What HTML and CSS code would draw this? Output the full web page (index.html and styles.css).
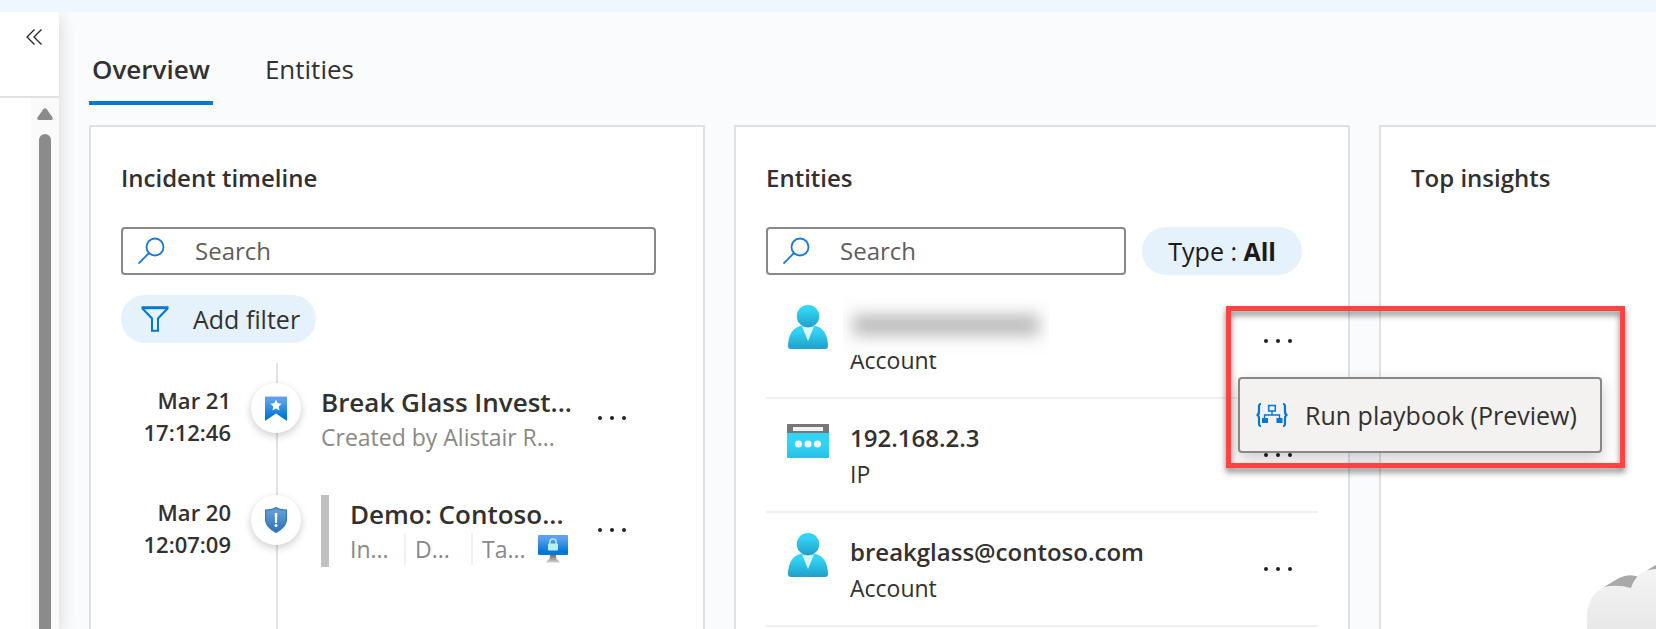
FILE: index.html
```
<!DOCTYPE html>
<html lang="en">
<head>
<meta charset="utf-8">
<title>Incident overview</title>
<link rel="stylesheet" href="styles.css">
</head>
<body>
<svg class="defs" width="0" height="0" aria-hidden="true">
  <defs>
    <linearGradient id="g-head" x1="0" y1="0" x2="0" y2="1"><stop offset=".2" stop-color="#32d4f5"/><stop offset="1" stop-color="#1f9fc8"/></linearGradient>
    <linearGradient id="g-window" x1="0" y1="0" x2="0" y2="1"><stop offset=".6" stop-color="#32d4f5"/><stop offset="1" stop-color="#2bbfe3"/></linearGradient>
    <linearGradient id="g-blue" x1="0" y1="0" x2="0" y2="1"><stop offset=".15" stop-color="#5ea0ef"/><stop offset=".85" stop-color="#0078d4"/></linearGradient>
    <linearGradient id="g-shield" x1="0" y1="0" x2="0" y2="1"><stop offset="0" stop-color="#6ba2dc"/><stop offset="1" stop-color="#2a72b8"/></linearGradient>
    <linearGradient id="g-cloud" x1="0" y1="0" x2="0" y2="1"><stop offset="0" stop-color="#f5f5f5"/><stop offset="1" stop-color="#dedede"/></linearGradient>
    <linearGradient id="g-stand" x1="0" y1="0" x2="0" y2="1"><stop offset="0" stop-color="#707070"/><stop offset="1" stop-color="#cfcfcf"/></linearGradient>
    <symbol id="i-search" viewBox="0 0 28 28"><circle cx="17" cy="10" r="8.5" fill="none" stroke="#1a78d8" stroke-width="1.8"/><path d="M11 16 .5 26.500" fill="none" stroke="#1a78d8" stroke-width="1.8"/></symbol>
    <symbol id="i-more" viewBox="0 0 30 6"><g fill="#1f1f1f"><circle cx="3" cy="3" r="2"/><circle cx="15" cy="3" r="2"/><circle cx="27" cy="3" r="2"/></g></symbol>
    <symbol id="i-user" viewBox="0 0 40 44"><path d="M3 44Q0 44 0 41C0 29 6 21 14 21H26C34 21 40 29 40 41Q40 44 37 44Z" fill="url(#g-head)"/><path d="M14 21.500H26L20 36Z" fill="#dcf6fd"/><circle cx="20" cy="11.200" r="11.200" fill="url(#g-head)"/></symbol>
  </defs>
</svg>
<div class="page">
  <header class="topbar"></header>
  <div class="body">
    <aside class="side">
      <div class="side-head">
        <button class="plain" aria-label="Collapse panel"><svg width="16" height="16" viewBox="0 0 16 16" fill="none" stroke="#252423" stroke-width="1.3"><path d="M8.500.5 1 8l7.500 7.500M15.500.5 8 8l7.500 7.500"/></svg></button>
      </div>
      <div class="scroll">
        <svg width="16" height="12" viewBox="0 0 16 12"><path d="M6 1.500Q8-1 10 1.500L15.500 9.500Q16.500 12 14 12H2Q-.5 12 .5 9.500Z" fill="#8b8b8b"/></svg>
        <div class="thumb"></div>
      </div>
    </aside>
    <main class="main">
      <nav class="tabs">
        <a class="tab active" href="#overview">Overview</a>
        <a class="tab" href="#entities">Entities</a>
      </nav>
      <div class="cards">
        <section class="card timeline-card">
          <h2>Incident timeline</h2>
          <div class="tools">
            <label class="search"><svg width="28" height="28"><use href="#i-search"/></svg><input type="text" placeholder="Search" aria-label="Search timeline"></label>
          </div>
          <button class="pill filter"><svg width="28" height="26" viewBox="0 0 28 26" fill="none" stroke="#0078d4" stroke-width="2"><path d="M1.500 1.200H26.500V2.500L17 12.500V24.800H11V12.500L1.500 2.500Z"/><path d="M1 2.200H27"/></svg>Add filter</button>
          <ol class="timeline">
            <li class="event">
              <time>Mar 21<br>17:12:46</time>
              <span class="dot"><svg width="22" height="25" viewBox="0 0 22 25"><path d="M0 0H22V25L11 17.500 0 25Z" fill="url(#g-blue)"/><path d="M0 0H22V1H0Z" fill="#b8d8fa"/><path d="m11 3.500 1.700 3.700 4 .5-3 2.800.8 4L11 12.500l-3.500 2 .8-4-3-2.800 4-.5Z" fill="#fff"/></svg></span>
              <div class="info">
                <h3>Break Glass Invest...</h3>
                <p>Created by Alistair R...</p>
              </div>
              <button class="more plain" aria-label="More actions"><svg width="30" height="6"><use href="#i-more"/></svg></button>
            </li>
            <li class="event">
              <time>Mar 20<br>12:07:09</time>
              <span class="dot"><svg width="22" height="26" viewBox="0 0 22 26"><path d="M11 .5C14 3 18 3 21.500 3V12C21.500 19 15.500 23 11 25.500 6.500 23 .5 19 .5 12V3C4 3 8 3 11 .5Z" fill="url(#g-shield)" stroke="#2f78bd" stroke-width="1.200"/><path d="M9.700 6H12.300L12 16H10Z" fill="#fff"/><circle cx="11" cy="18.500" r="1.500" fill="#fff"/></svg></span>
              <div class="info alert">
                <h3>Demo: Contoso...</h3>
                <p class="tags"><span>In...</span><span>D...</span><span>Ta...</span>
                  <svg width="30" height="28" viewBox="0 0 30 28"><path d="M12 20H18L18.500 24Q21 25.500 22 27.500H8Q9 25.500 11.500 24Z" fill="url(#g-stand)"/><rect width="30" height="20" rx="1" fill="url(#g-blue)"/><path d="M11.800 9V7.200a3.200 3.200 0 0 1 6.400 0V9" fill="none" stroke="#a9e9fb" stroke-width="1.600"/><rect x="10" y="8.500" width="10" height="7" rx="1" fill="#b5f0fc"/></svg></p>
              </div>
              <button class="more plain" aria-label="More actions"><svg width="30" height="6"><use href="#i-more"/></svg></button>
            </li>
          </ol>
        </section>
        <section class="card entities-card">
          <h2>Entities</h2>
          <div class="tools">
            <label class="search"><svg width="28" height="28"><use href="#i-search"/></svg><input type="text" placeholder="Search" aria-label="Search entities"></label>
            <button class="pill type">Type : <b>All</b></button>
          </div>
          <ul class="entities">
            <li class="entity">
              <svg class="kind" width="42" height="44"><use href="#i-user"/></svg>
              <div class="who"><span class="mask"><span class="smudge"></span></span><strong></strong><span>Account</span></div>
              <div class="actions">
                <button class="more plain" aria-label="More actions"><svg width="30" height="6"><use href="#i-more"/></svg></button>
                <div class="callout"></div>
                <button class="menu"><svg width="32" height="24" viewBox="0 0 32 24" fill="none" stroke="#0078d4"><path d="M5 1C3 1 3 2 3 4V8.500Q3 12 .5 12 3 12 3 15.500V20C3 22 3 23 5 23M27 1C29 1 29 2 29 4V8.500Q29 12 31.500 12 29 12 29 15.500V20C29 22 29 23 27 23" stroke-width="2.200"/><rect x="12.700" y="2.500" width="6.600" height="5.500" stroke-width="1.500"/><path d="M16 8V12M8.500 15V12H23.500V15" stroke-width="1.400"/><path d="M6 15H12V20H6ZM20.500 15H26.500V20H20.500Z" fill="#0078d4" stroke="none"/></svg>Run playbook (Preview)</button>
              </div>
            </li>
            <li class="entity">
              <svg class="kind" width="42" height="44" viewBox="0 -5 42 44"><rect width="42" height="34" rx="1" fill="url(#g-window)"/><path d="M0 9V1Q0 0 1 0H41Q42 0 42 1V9Z" fill="#767676"/><rect x="6" y="3" width="30" height="4" fill="#f2f2f2"/><g fill="#f2f2f2"><circle cx="11.500" cy="20" r="3.600"/><circle cx="21" cy="20" r="3.600"/><circle cx="30.500" cy="20" r="3.600"/></g></svg>
              <div class="who"><strong>192.168.2.3</strong><span>IP</span></div>
              <div class="actions"><button class="more plain" aria-label="More actions"><svg width="30" height="6"><use href="#i-more"/></svg></button></div>
            </li>
            <li class="entity">
              <svg class="kind" width="42" height="44"><use href="#i-user"/></svg>
              <div class="who"><strong>breakglass@contoso.com</strong><span>Account</span></div>
              <div class="actions"><button class="more plain" aria-label="More actions"><svg width="30" height="6"><use href="#i-more"/></svg></button></div>
            </li>
          </ul>
        </section>
        <section class="card">
          <h2>Top insights</h2>
          <svg class="cloud" width="200" height="130" viewBox="0 0 200 130"><path d="M17 22 32 13Q42 8 52 12L62 4 76-4 130-4V30L40 40Z" fill="#a9a9a9"/><path d="M0 64C-2 42 4 28 17 22Q30 19 44 23C48 10 58 4 70 4 90-6 130-6 140 24 180 20 200 40 200 70Q200 110 165 120H35Q4 110 0 64Z" fill="url(#g-cloud)"/></svg>
        </section>
      </div>
    </main>
  </div>
</div>
</body>
</html>
```
FILE: styles.css
```
* { box-sizing: border-box; }
body {
  margin: 0;
  color: #323130;
  background: #fafbfd;
  font: 24px/36px "Open Sans", "Noto Sans", sans-serif;
}
h2, h3, p, ol, ul { margin: 0; padding: 0; list-style: none; }
svg { display: block; flex: none; }
button, input { font: inherit; color: inherit; }
button { border: 0; cursor: pointer; }
.plain { background: none; padding: 0; display: flex; }
.defs { position: absolute; }

.page { display: flex; flex-direction: column; height: 100vh; overflow: hidden; }
.topbar { flex: none; height: 12px; background: #eef6ff; }
.body { flex: 1; display: flex; min-height: 0; }

.side {
  flex: none;
  width: 59px;
  display: flex;
  flex-direction: column;
  background: #fff;
  box-shadow: 0 4px 16px rgba(0, 0, 0, .16);
  clip-path: inset(0 -24px 0 0);
}
.side-head {
  height: 86px;
  padding: 17px 17px 0 0;
  display: flex;
  justify-content: flex-end;
  align-items: flex-start;
  border-bottom: 2px solid #e1e1e1;
}
.scroll {
  flex: 1;
  width: 28px;
  align-self: flex-end;
  padding-top: 10px;
  display: flex;
  flex-direction: column;
  align-items: center;
  gap: 14px;
  background: #fafafa;
}
.thumb { flex: 1; width: 12px; border-radius: 6px 6px 0 0; background: #8b8b8b; }

.main { flex: 1; min-width: 0; padding-left: 30px; overflow: hidden; }
.tabs { display: flex; gap: 49px; padding: 39px 0 20px; font-size: 26px; }
.tab { padding: 0 3px 14px; color: inherit; text-decoration: none; border-bottom: 4px solid transparent; }
.tab.active { font-weight: 600; border-color: #0078d4; }

.cards { display: grid; grid-template-columns: repeat(3, minmax(616px, 1fr)); gap: 29px; }
.card {
  display: flex;
  flex-direction: column;
  padding: 33px 30px 40px;
  border: 2px solid #e1e1e1;
  background: #fff;
}
.timeline-card { padding-right: 47px; }
.card h2 { font-size: 24px; font-weight: 600; }
.tools { display: flex; gap: 16px; margin-top: 31px; }
.entities-card .tools { padding-right: 16px; }
.search {
  flex: 1;
  min-width: 0;
  height: 48px;
  padding: 0 15px;
  display: flex;
  align-items: center;
  gap: 29px;
  border: 2px solid #8a8886;
  border-radius: 4px;
}
.search input { flex: 1; min-width: 0; padding: 0; border: 0; outline: 0; background: none; }
.search input::placeholder { color: #605e5c; opacity: 1; }
.pill { height: 48px; border-radius: 24px; background: #e5f1fb; font-size: 25px; white-space: pre; }
.filter { align-self: flex-start; margin-top: 20px; padding: 0 16px 0 20px; display: flex; align-items: center; gap: 24px; }
.type { padding: 0 26px; color: #1b1a19; }

.timeline {
  margin-top: 20px;
  padding-top: 20px;
  min-height: 300px;
  background: linear-gradient(#e1e1e1, #e1e1e1) 155px 0 / 2px 100% no-repeat;
}
.event { display: grid; grid-template-columns: 110px 50px 248px 30px; column-gap: 20px; height: 112px; align-items: start; }
.event time { padding-top: 1px; text-align: right; font-size: 22px; line-height: 32px; font-weight: 600; }
.dot {
  width: 50px;
  height: 50px;
  display: flex;
  align-items: center;
  justify-content: center;
  border-radius: 50%;
  background: #fff;
  box-shadow: 0 3px 8px rgba(0, 0, 0, .2);
}
.info { min-width: 0; white-space: nowrap; }
.info h3 { font-size: 26px; font-weight: 600; line-height: 38px; }
.info p { color: #8a8886; font-size: 23px; line-height: 32px; }
.alert { padding: 0 0 2px 21px; border-left: 8px solid #c0c0c0; }
.tags { display: flex; align-items: center; }
.tags span { width: 54px; }
.tags span + span { width: 67px; padding-left: 9px; border-left: 2px solid #f0f0f0; }
.event .more { margin: 32px 0 0 8px; }

.entities { margin-top: 10px; }
.entity { height: 114px; padding: 20px 14px 0 21px; display: flex; gap: 21px; border-bottom: 2px solid #f0f0f0; }
.who { position: relative; flex: 1; min-width: 0; display: flex; flex-direction: column; padding-top: 1px; }
.who strong { height: 36px; font-weight: 600; font-size: 24px; }
.who > span:last-child { font-size: 23px; }
.mask { position: absolute; left: -7px; top: -7px; width: 206px; height: 57px; display: flex; align-items: center; overflow: hidden; background: #fefefe; }
.smudge { flex: 1; height: 20px; margin: 0 10px 4px; background: #b8b8b8; filter: blur(8px); }
.actions { position: relative; padding: 33px 11px 0 0; }
.callout {
  position: absolute;
  left: -37px;
  top: 1px;
  width: 399px;
  height: 162px;
  border: 5px solid #ff4343;
  filter: drop-shadow(0 4px 3px rgba(0, 0, 0, .5));
  pointer-events: none;
  z-index: 3;
}
.menu {
  position: absolute;
  left: -25px;
  top: 72px;
  z-index: 2;
  width: 364px;
  height: 76px;
  padding: 0 16px;
  display: flex;
  align-items: center;
  gap: 17px;
  font-size: 25px;
  white-space: nowrap;
  border: 2px solid #8a8886;
  border-radius: 4px;
  background: #f3f2f1;
  box-shadow: 0 6px 16px rgba(0, 0, 0, .2);
}
.cloud { align-self: center; margin-top: 369px; }
```
